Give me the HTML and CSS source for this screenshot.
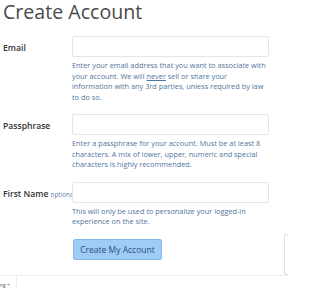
FILE: index.html
```html
<!DOCTYPE html>
<html>
<head>
<meta charset="utf-8">
<link rel="stylesheet" href="styles.css">
</head>
<body>
<div class="page">
  <h1 class="title">Create Account</h1>
  <form class="form">
    <div class="row">
      <label class="label">Email</label>
      <div class="field">
        <div class="input"></div>
        <p class="help">Enter your email address that you want to associate with your account. We will <u>never</u> sell or share your information with any 3rd parties, unless required by law to do so.</p>
      </div>
    </div>
    <div class="row">
      <label class="label">Passphrase</label>
      <div class="field">
        <div class="input"></div>
        <p class="help">Enter a passphrase for your account. Must be at least 8 characters. A mix of lower, upper, numeric and special characters is highly recommended.</p>
      </div>
    </div>
    <div class="row">
      <label class="label">First Name <span class="opt">optional</span></label>
      <div class="field">
        <div class="input"></div>
        <p class="help">This will only be used to personalize your logged-in experience on the site.</p>
      </div>
    </div>
    <div class="row">
      <div class="label"></div>
      <div class="field">
        <button type="button" class="btn">Create My Account</button>
      </div>
    </div>
  </form>
  <div class="side-box"></div>
</div>
<div class="footer">
  <span class="lang">ng ÷</span>
</div>
</body>
</html>
```
FILE: styles.css
```css
html, body {
  margin: 0;
  padding: 0;
  background: #fff;
  font-family: "Open Sans", "Noto Sans", sans-serif;
  overflow: hidden;
  width: 288px;
  height: 288px;
}
.page {
  position: relative;
  height: 275px;
  padding-left: 3px;
  box-sizing: border-box;
}
.title {
  margin: 0;
  font-size: 19.6px;
  font-weight: 400;
  line-height: 24px;
  color: #4a4a4a;
}
.form {
  margin-top: 12px;
  display: flex;
  flex-direction: column;
}
.row {
  display: grid;
  grid-template-columns: 69px 197px;
  margin-bottom: 12px;
}
.label {
  font-size: 8.6px;
  font-weight: 600;
  color: #333;
  padding-top: 6px;
  white-space: nowrap;
  overflow: hidden;
}
.opt {
  font-size: 6.4px;
  font-weight: 400;
  color: #5a7aa0;
}
.input {
  border: 1px solid #e6e6e6;
  border-radius: 2px;
  box-sizing: border-box;
  height: 21px;
}
.help {
  margin: 3px 0 0 0;
  font-size: 7.35px;
  line-height: 10.5px;
  color: #52759a;
}
.btn {
  display: block;
  margin: 0 0 0 1px;
  height: 21px;
  width: 89px;
  padding: 0;
  background: #9fcbf7;
  border: 1px solid #86b8ea;
  border-radius: 2px;
  font-family: "Open Sans", sans-serif;
  font-size: 8.5px;
  color: #2c4f7c;
}
.side-box {
  position: absolute;
  left: 284px;
  top: 234px;
  width: 10px;
  height: 39px;
  border: 1px solid #ddd;
  border-radius: 2px;
}
.footer {
  border-top: 1px solid #eee;
  height: 13px;
}
.lang {
  display: inline-block;
  font-size: 5px;
  line-height: 6px;
  color: #555;
  padding: 6px 6px 0 0;
  border-right: 1px solid #eee;
  height: 13px;
  box-sizing: border-box;
  vertical-align: top;
}
```
